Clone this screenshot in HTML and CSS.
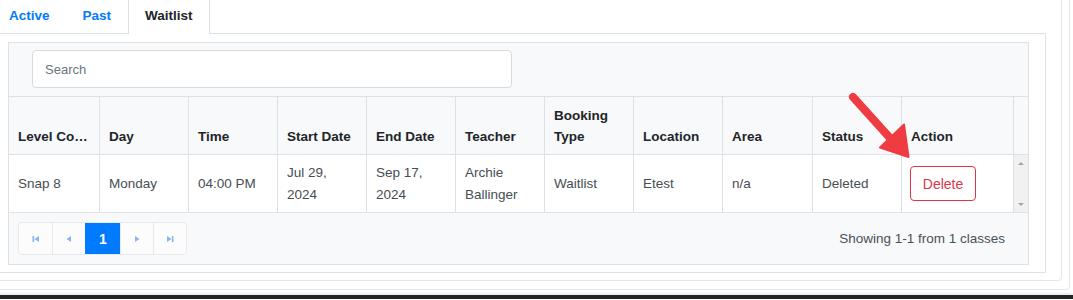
FILE: index.html
```html
<!DOCTYPE html>
<html lang="en">
<head>
    <meta charset="UTF-8">
    <meta name="viewport" content="width=device-width, initial-scale=1.0">
    <title>Bookings - Waitlist</title>
    <link rel="stylesheet" href="styles.css">
</head>
<body>
    <div class="card-outer">
    <div class="card-inner">
        <ul class="tabs">
            <li class="tab">Active</li>
            <li class="tab">Past</li>
            <li class="tab active">Waitlist</li>
        </ul>
        <div class="tab-content">
        <div class="panel">
            <div class="toolbar">
                <input class="search" type="text" placeholder="Search">
            </div>
            <div class="grid">
                <div class="th"><span class="cut">Level Course</span></div>
                <div class="th">Day</div>
                <div class="th">Time</div>
                <div class="th">Start Date</div>
                <div class="th">End Date</div>
                <div class="th">Teacher</div>
                <div class="th">Booking Type</div>
                <div class="th">Location</div>
                <div class="th">Area</div>
                <div class="th">Status</div>
                <div class="th">Action</div>
                <div class="th last"></div>

                <div class="td">Snap 8</div>
                <div class="td">Monday</div>
                <div class="td">04:00 PM</div>
                <div class="td">Jul 29, 2024</div>
                <div class="td">Sep 17, 2024</div>
                <div class="td">Archie Ballinger</div>
                <div class="td">Waitlist</div>
                <div class="td">Etest</div>
                <div class="td">n/a</div>
                <div class="td">Deleted</div>
                <div class="td"><button class="btn-delete">Delete</button></div>
                <div class="td last track">
                    <span class="tri up"></span>
                    <span class="tri down"></span>
                </div>
            </div>
            <div class="footer">
                <div class="pager">
                    <span class="page-btn">
                        <svg width="8" height="8" viewBox="0 0 8 8"><rect x="0.5" y="1" width="1.6" height="6"/><path d="M7 1 L2.4 4 L7 7 Z"/></svg>
                    </span>
                    <span class="page-btn">
                        <svg width="8" height="8" viewBox="0 0 8 8"><path d="M6 1 L1.5 4 L6 7 Z"/></svg>
                    </span>
                    <span class="page-btn current">1</span>
                    <span class="page-btn">
                        <svg width="8" height="8" viewBox="0 0 8 8"><path d="M2 1 L6.5 4 L2 7 Z"/></svg>
                    </span>
                    <span class="page-btn">
                        <svg width="8" height="8" viewBox="0 0 8 8"><path d="M1 1 L5.6 4 L1 7 Z"/><rect x="5.9" y="1" width="1.6" height="6"/></svg>
                    </span>
                </div>
                <span class="showing">Showing 1-1 from 1 classes</span>
            </div>
        </div>
        </div>
    </div>
    </div>
    <div class="dock"></div>

    <!-- annotation arrow drawn over the table -->
    <svg class="pointer" width="80" height="80" viewBox="0 0 80 80">
        <line x1="13" y1="12" x2="50" y2="53" stroke="#ef3b42" stroke-width="8" stroke-linecap="round"/>
        <path d="M40 62.5 L64 39.5 L68.5 72 Z" fill="#ef3b42" stroke="#ef3b42" stroke-width="2" stroke-linejoin="round"/>
    </svg>
</body>
</html>
```

FILE: styles.css
```css
body {
    margin: 0;
    height: 300px;
    overflow: hidden;
    background: #fff;
    color: #212529;
    font-family: "Liberation Sans", Arial, sans-serif;
    font-size: 13.5px;
}

/* nested cards, left/top edges are off screen */
.card-outer {
    margin: -20px 3px 0 -30px;
    padding: 0 7px 8px 7px;
    border: 1px solid #e3e5e8;
    border-radius: 4px;
}
.card-inner {
    padding: 0 15px 7px 14px;
    border: 1px solid #e3e5e8;
    border-radius: 4px;
}

.tabs {
    display: flex;
    gap: 1px;
    height: 52px;
    box-sizing: border-box;
    margin: 0;
    padding: 0;
    list-style: none;
    border-bottom: 1px solid #dee2e6;
}
.tab {
    height: 52px;
    box-sizing: border-box;
    margin-bottom: -1px;
    padding: 23px 15px 0;
    border: 1px solid transparent;
    border-bottom: 0;
    line-height: 20px;
    font-weight: bold;
    color: #007bff;
}
.tab.active {
    padding: 23px 16px 0;
    background: #fff;
    color: #212529;
    border-color: #dee2e6;
}

.tab-content {
    padding: 8px 16px 7px 14px;
    border: 1px solid #dee2e6;
    border-top: 0;
}

.panel {
    width: 1021px;
    box-sizing: border-box;
    background: #f8f9fa;
    border: 1px solid #dee2e6;
}

.toolbar {
    padding: 7px 0 8px 23px;
}
.search {
    display: block;
    width: 480px;
    height: 38px;
    box-sizing: border-box;
    padding: 0 12px;
    border: 1px solid #d6dadf;
    border-radius: 4px;
    background: #fff;
    font-family: "Liberation Sans", Arial, sans-serif;
    font-size: 13px;
    color: #495057;
}
.search::placeholder {
    color: #6c757d;
}

.grid {
    display: grid;
    grid-template-columns: 91px 89px 89px 89px 89px 89px 89px 89px 90px 89px 112px 14px;
}
.th, .td {
    box-sizing: border-box;
    border-top: 1px solid #dee2e6;
    border-right: 1px solid #dee2e6;
    padding: 0 9px;
    display: flex;
    min-width: 0;
}
.th {
    height: 58px;
    align-items: flex-end;
    padding-bottom: 7px;
    line-height: 21px;
    font-weight: bold;
}
.td {
    height: 58px;
    align-items: center;
    line-height: 22px;
    background: #fff;
    color: #474d53;
}
.th.last, .td.last {
    border-right: 0;
    padding: 0;
}
.cut {
    overflow: hidden;
    white-space: nowrap;
    text-overflow: ellipsis;
}

.track {
    background: #f1f1f1;
    flex-direction: column;
    justify-content: space-between;
    align-items: center;
    padding: 7px 0 6px !important;
}
.tri {
    width: 0;
    height: 0;
    border-left: 3px solid transparent;
    border-right: 3px solid transparent;
}
.tri.up {
    border-bottom: 3px solid #a3a3a3;
}
.tri.down {
    border-top: 3px solid #a3a3a3;
}

.btn-delete {
    width: 66px;
    height: 35px;
    margin-left: -1px;
    border: 1px solid #dc3545;
    border-radius: 4px;
    background: #fff;
    color: #dc3545;
    font-family: "Liberation Sans", Arial, sans-serif;
    font-size: 14px;
}

.footer {
    display: flex;
    justify-content: space-between;
    align-items: center;
    padding: 9px 23px 9px 9px;
    border-top: 1px solid #dee2e6;
}
.pager {
    display: flex;
    border: 1px solid #e7eaed;
    border-radius: 4px;
    background: #fcfcfd;
    overflow: hidden;
}
.page-btn {
    width: 33px;
    height: 31px;
    box-sizing: border-box;
    display: flex;
    align-items: center;
    justify-content: center;
    border-left: 1px solid #e7eaed;
    fill: #86b6f2;
}
.page-btn:first-child {
    border-left: 0;
}
.page-btn.current {
    width: 35px;
    background: #007bff;
    border-left-color: #007bff;
    color: #fff;
    font-weight: bold;
    font-size: 14px;
}
.showing {
    color: #495057;
    font-size: 13.5px;
}

.dock {
    height: 4px;
    margin-top: 5px;
    background: #212529;
    box-shadow: 0 -2px 2px rgba(0, 0, 0, 0.08);
}

.pointer {
    position: absolute;
    left: 840px;
    top: 85px;
    pointer-events: none;
}
```
